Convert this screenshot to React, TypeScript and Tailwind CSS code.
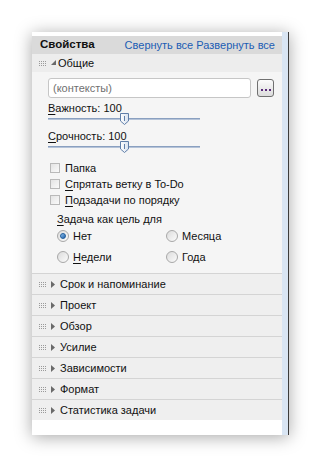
import React from "react";

function Grip() {
  const dots: React.ReactNode[] = [];
  for (let r = 0; r < 3; r++)
    for (let c = 0; c < 4; c++)
      dots.push(<rect key={`${r}-${c}`} x={c * 2} y={r * 2} width={1} height={1} fill="#9a9a9a" />);
  return (
    <svg width="7" height="5" viewBox="0 0 7 5" className="shrink-0">
      {dots}
    </svg>
  );
}

function TriDown() {
  return (
    <svg width="5" height="5" viewBox="0 0 5 5" className="shrink-0">
      <polygon points="5,0 5,5 0,5" fill="#6a6a6a" />
    </svg>
  );
}

function TriRight() {
  return (
    <svg width="4" height="7" viewBox="0 0 4 7" className="shrink-0">
      <polygon points="0,0 4,3.5 0,7" fill="#6a6a6a" />
    </svg>
  );
}

function Slider() {
  return (
    <div className="relative h-[12px] w-[152px]">
      <div className="absolute left-0 right-0 top-[5px] h-[2px] bg-[#b5c3d8] border-t border-[#8aa0c0]" />
      <svg width="9" height="12" viewBox="0 0 9 12" className="absolute left-[72px] top-0">
        <defs>
          <linearGradient id="thumbg" x1="0" x2="1" y1="0" y2="0">
            <stop offset="0" stopColor="#ffffff" />
            <stop offset="1" stopColor="#d7e1ee" />
          </linearGradient>
        </defs>
        <path d="M0.5 0.5 H8.5 V8 L4.5 11.5 L0.5 8 Z" fill="url(#thumbg)" stroke="#5f7ea8" strokeWidth="1" />
        <line x1="4.5" y1="3" x2="4.5" y2="8" stroke="#5f7ea8" strokeWidth="1" />
      </svg>
    </div>
  );
}

function Checkbox({ label }: { label: React.ReactNode }) {
  return (
    <div className="h-[16px] flex items-center pl-[18px]">
      <div className="w-[10px] h-[10px] border border-[#b9b9b9] bg-gradient-to-br from-[#e4e4e4] to-[#fafafa] shrink-0" />
      <span className="ml-[5px]">{label}</span>
    </div>
  );
}

function Radio({ label, checked }: { label: React.ReactNode; checked?: boolean }) {
  return (
    <div className="flex items-center">
      <div className="w-[12px] h-[12px] rounded-full border border-[#a8a8a8] bg-gradient-to-br from-[#dcdcdc] to-[#fbfbfb] flex items-center justify-center shrink-0">
        {checked && (
          <div className="w-[6px] h-[6px] rounded-full bg-gradient-to-br from-[#8fc2ee] to-[#1c5fa8] border border-[#1f5d9c]" />
        )}
      </div>
      <span className="ml-[4px]">{label}</span>
    </div>
  );
}

const U = ({ c }: { c: string }) => <span className="underline underline-offset-[2px] decoration-1">{c}</span>;

function Row({ title }: { title: string }) {
  return (
    <div className="h-[21px] border-t border-[#d4d4d4] bg-[#efefef] flex items-center pl-[7px]">
      <Grip />
      <div className="ml-[5px]"><TriRight /></div>
      <span className="ml-[5px]">{title}</span>
    </div>
  );
}

export default function App() {
  return (
    <div className="w-[321px] h-[467px] bg-white pt-[32px] pl-[32px] font-['Liberation_Sans',Arial,sans-serif] text-[11px] leading-none text-[#111]">
      <div className="flex w-[257px] h-[403px] bg-white shadow-[0_2px_16px_rgba(0,0,0,0.35)]">
        <div className="w-[250px] flex flex-col pt-[4px]">
          <div className="h-[18px] bg-[#dadada] flex items-center justify-between pl-[8px] pr-[7px]">
            <span className="font-bold text-[11.5px]">Свойства</span>
            <span className="text-[#1c5db4]">Свернуть все Развернуть все</span>
          </div>
          <div className="h-[18px] bg-[#ededed] flex items-center pl-[7px]">
            <Grip />
            <div className="ml-[5px] mb-[2px]"><TriDown /></div>
            <span className="ml-[2px]">Общие</span>
          </div>
          <div className="bg-[#f5f5f5] flex flex-col pl-[16px]">
            <div className="mt-[6px] flex items-center">
              <div className="w-[203px] h-[20px] border border-[#c6c6c6] rounded-[3px] bg-white flex items-center pl-[4px] text-[#707070]">
                (контексты)
              </div>
              <div className="ml-[6px] w-[17px] h-[18px] border border-[#707070] rounded-[3px] bg-gradient-to-b from-[#fbfbfb] to-[#dcdcdc] flex items-end justify-center pb-[5px]">
                <div className="flex gap-[2px]">
                  <div className="w-[2px] h-[2px] bg-[#5a2a7a]" />
                  <div className="w-[2px] h-[2px] bg-[#5a2a7a]" />
                  <div className="w-[2px] h-[2px] bg-[#5a2a7a]" />
                </div>
              </div>
            </div>
            <div className="mt-[3px] h-[14px] flex items-center">
              <span><U c="В" />ажность: 100</span>
            </div>
            <div className="mt-[-2px]"><Slider /></div>
            <div className="mt-[4px] h-[14px] flex items-center">
              <span><U c="С" />рочность: 100</span>
            </div>
            <div className="mt-[-2px]"><Slider /></div>
            <div className="mt-[7px] -ml-[16px]">
              <Checkbox label="Папка" />
              <Checkbox label={<><U c="С" />прятать ветку в To-Do</>} />
              <Checkbox label={<><U c="П" />одзадачи по порядку</>} />
            </div>
            <div className="mt-[4px] h-[14px] flex items-center pl-[9px]">
              <span><U c="З" />адача как цель для</span>
            </div>
            <div className="mt-[2px] h-[16px] grid grid-cols-[109px_1fr] items-center pl-[9px]">
              <Radio label="Нет" checked />
              <Radio label="Месяца" />
            </div>
            <div className="mt-[5px] h-[16px] grid grid-cols-[109px_1fr] items-center pl-[9px]">
              <Radio label={<><U c="Н" />едели</>} />
              <Radio label="Года" />
            </div>
            <div className="h-[8px]" />
          </div>
          <Row title="Срок и напоминание" />
          <Row title="Проект" />
          <Row title="Обзор" />
          <Row title="Усилие" />
          <Row title="Зависимости" />
          <Row title="Формат" />
          <Row title="Статистика задачи" />
          <div className="flex-1 bg-white" />
        </div>
        <div className="w-[6px] bg-[#d9e5f3]" />
        <div className="w-[1px] bg-[#3c3c3c]" />
      </div>
    </div>
  );
}
